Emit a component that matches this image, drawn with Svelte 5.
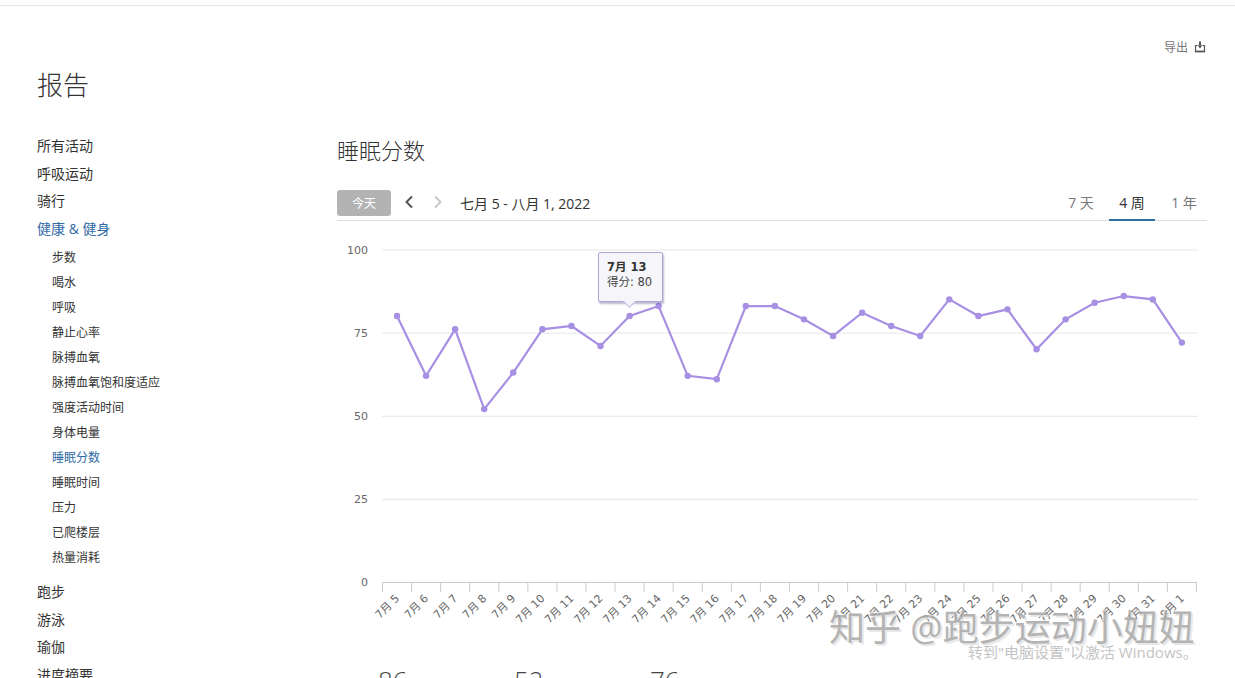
<script lang="ts">
	const topBefore = ['所有活动', '呼吸运动', '骑行'];
	const health = ['步数', '喝水', '呼吸', '静止心率', '脉搏血氧', '脉搏血氧饱和度适应', '强度活动时间', '身体电量', '睡眠分数', '睡眠时间', '压力', '已爬楼层', '热量消耗'];
	const topAfter = ['跑步', '游泳', '瑜伽', '进度摘要'];

	const scores = [80, 62, 76, 52, 63, 76, 77, 71, 80, 83, 62, 61, 83, 83, 79, 74, 81, 77, 74, 85, 80, 82, 70, 79, 84, 86, 85, 72];
	const labels = scores.map((_, i) => (i < 27 ? `7月 ${i + 5}` : '8月 1'));

	// chart svg starts at x=337, y=240 on the page
	const step = 29.07;
	const xOf = (i: number) => 60 + i * step;
	const yOf = (v: number) => 343 - v * 3.325;
	const line = scores.map((v, i) => `${xOf(i)},${yOf(v)}`).join(' ');
	const ticks = Array.from({ length: 29 }, (_, i) => 45.5 + i * step);
</script>

<div class="page">
	<div class="topline"></div>
	<div class="export">
		<span>导出</span>
		<svg width="12" height="12" viewBox="0 0 12 12" fill="none" stroke="#555" stroke-width="1.2">
			<path d="M3.5 4.5H1.5v6h9v-6H8.5" />
			<path d="M1 10.5h10" stroke-width="1.8" />
			<path d="M6 .5v4" stroke-width="2" />
			<path d="M3.6 4.2 6 7.4l2.4-3.2z" fill="#555" stroke="none" />
		</svg>
	</div>
	<h1>报告</h1>

	<div class="content">
		<nav>
			{#each topBefore as item}
				<div class="top">{item}</div>
			{/each}
			<div class="top active">健康 &amp; 健身</div>
			<div class="subs">
				{#each health as item}
					<div class="sub" class:active={item === '睡眠分数'}>{item}</div>
				{/each}
			</div>
			{#each topAfter as item}
				<div class="top">{item}</div>
			{/each}
		</nav>

		<main>
			<h2>睡眠分数</h2>
			<div class="toolbar">
				<button class="today">今天</button>
				<svg class="arrow" width="10" height="14" viewBox="0 0 10 14" fill="none" stroke="#555" stroke-width="2"><path d="M8 1.5 2.5 7 8 12.5" /></svg>
				<svg class="arrow next" width="10" height="14" viewBox="0 0 10 14" fill="none" stroke="#c8c8c8" stroke-width="2"><path d="M2 1.5 7.5 7 2 12.5" /></svg>
				<span class="range">七月 5 - 八月 1, 2022</span>
				<div class="tabs">
					<span class="tab">7 天</span>
					<span class="tab on">4 周</span>
					<span class="tab">1 年</span>
				</div>
			</div>

			<div class="chart">
				<svg width="870" height="420" viewBox="0 0 870 420">
					{#each [100, 75, 50, 25, 0] as v}
						<line x1="45" x2={v === 0 ? 860 : 861} y1={yOf(v) + 0.5} y2={yOf(v) + 0.5} stroke={v === 0 ? '#ccc' : '#e6e6e6'} />
						<text class="ylab" x="31" y={yOf(v) + 4} text-anchor="end">{v}</text>
					{/each}
					{#each ticks as t}
						<line x1={t} x2={t} y1={yOf(0)} y2={yOf(0) + 10} stroke="#ccc" />
					{/each}
					{#each labels as label, i}
						<text class="xlab" text-anchor="end" transform="translate({xOf(i) + 3} {yOf(0) + 17}) rotate(-45)">{label}</text>
					{/each}
					<polyline points={line} fill="none" stroke="#a78fe3" stroke-width="2.2" />
					{#each scores as v, i}
						<circle cx={xOf(i)} cy={yOf(v)} r="3.2" fill="#a78fe3" />
					{/each}
				</svg>
				<div class="tooltip">
					<b>7月 13</b>
					<span>得分: 80</span>
				</div>
			</div>

			<div class="stats">
				<span>86</span>
				<span>52</span>
				<span>76</span>
			</div>
		</main>
	</div>

	<div class="watermark">知乎 @跑步运动小妞妞</div>
	<div class="activate">转到"电脑设置"以激活 Windows。</div>
</div>

<style>
	:global(body) {
		margin: 0;
		background: #fff;
		overflow: hidden;
	}

	.page {
		position: relative;
		height: 678px;
		overflow: hidden;
		font-family: "Open Sans", "Noto Sans CJK SC", sans-serif;
		color: #333;
		padding-top: 5px;
		box-sizing: border-box;
	}

	.topline {
		height: 1px;
		background: #e6e6e6;
	}

	.export {
		display: flex;
		justify-content: flex-end;
		align-items: center;
		gap: 5px;
		height: 20px;
		margin-top: 31px;
		padding-right: 29px;
		font-size: 12px;
		color: #777;
	}

	.export span {
		margin-right: 1px;
	}

	h1 {
		margin: 9px 0 0 37px;
		height: 38px;
		font-size: 26px;
		line-height: 38px;
		font-weight: 300;
		color: #333;
	}

	.content {
		display: grid;
		grid-template-columns: 337px 870px;
		margin-top: 39px;
	}

	nav {
		padding: 0 0 0 37px;
		margin-top: -11px;
	}

	.top {
		height: 27.5px;
		line-height: 27.5px;
		font-size: 14px;
		color: #333;
	}

	.sub {
		height: 25px;
		line-height: 25px;
		font-size: 12px;
		padding-left: 15px;
		color: #333;
	}

	.subs {
		padding-bottom: 8px;
		margin-top: 3px;
	}

	.active {
		color: #2f6aa6;
	}

	main {
		margin-top: -8px;
	}

	h2 {
		margin: 0;
		height: 34px;
		font-size: 22px;
		line-height: 30px;
		font-weight: 300;
		color: #333;
	}

	.toolbar {
		display: flex;
		align-items: center;
		height: 37px;
		margin-top: 15px;
		border-bottom: 1px solid #ddd;
		box-sizing: border-box;
	}

	.today {
		width: 54px;
		height: 26px;
		margin-bottom: -1px;
		border: none;
		border-radius: 3px;
		background: #b3b3b3;
		color: #fff;
		font: inherit;
		font-size: 12px;
		padding: 0;
	}

	.arrow {
		margin: 0 0 1px 13px;
	}

	.arrow.next {
		margin-left: 19px;
	}

	.range {
		margin: 0 0 -1px 17px;
		font-size: 14px;
		color: #333;
	}

	.tabs {
		display: flex;
		margin-left: auto;
		align-self: stretch;
	}

	.tab {
		width: 46px;
		text-align: center;
		font-size: 14px;
		color: #777;
		line-height: 37px;
		box-sizing: border-box;
	}

	.tab:nth-child(1) {
		margin-right: 5px;
	}

	.tab:nth-child(3) {
		margin-left: 6px;
	}

	.tab.on {
		color: #333;
		height: 37px;
		border-bottom: 2px solid #2a6f9e;
	}

	.chart {
		position: relative;
		height: 420px;
	}

	.chart svg {
		display: block;
		margin-top: 18px;
	}

	.ylab,
	.xlab {
		font-family: "DejaVu Sans", "Noto Sans CJK SC", sans-serif;
		font-size: 11px;
		fill: #666;
	}

	.tooltip {
		position: absolute;
		left: 261px;
		top: 13px;
		width: 65px;
		height: 50px;
		box-sizing: border-box;
		padding: 7px 0 0 8px;
		display: flex;
		flex-direction: column;
		background: #f6f6fa;
		border: 1px solid #b0a4d8;
		border-radius: 2px;
		box-shadow: 1px 2px 2px rgba(90, 80, 130, 0.4);
		font-family: "DejaVu Sans", "Noto Sans CJK SC", sans-serif;
		font-size: 11.5px;
		line-height: 15px;
		color: #444;
		white-space: nowrap;
	}

	.tooltip b {
		color: #333;
	}

	.tooltip::after {
		content: '';
		position: absolute;
		left: 26px;
		bottom: -5px;
		width: 8px;
		height: 8px;
		background: #f6f6fa;
		border-right: 1px solid #c0b6e0;
		border-bottom: 1px solid #c0b6e0;
		transform: rotate(45deg);
	}

	.stats {
		display: flex;
		margin-left: 41px;
		font-size: 26px;
		font-weight: 300;
		color: #444;
		line-height: 30px;
		margin-top: 6px;
	}

	.stats span {
		width: 136px;
	}

	.watermark {
		position: absolute;
		left: 829px;
		top: 606px;
		font-size: 36px;
		line-height: 44px;
		white-space: nowrap;
		color: #a8a8a8;
		opacity: 0.85;
		text-shadow: 2px 2px 0 #e4e4e4, -1px -1px 0 #fff;
	}

	.activate {
		position: absolute;
		left: 968px;
		top: 642px;
		font-size: 15px;
		line-height: 20px;
		white-space: nowrap;
		color: #c4c4c4;
	}
</style>
